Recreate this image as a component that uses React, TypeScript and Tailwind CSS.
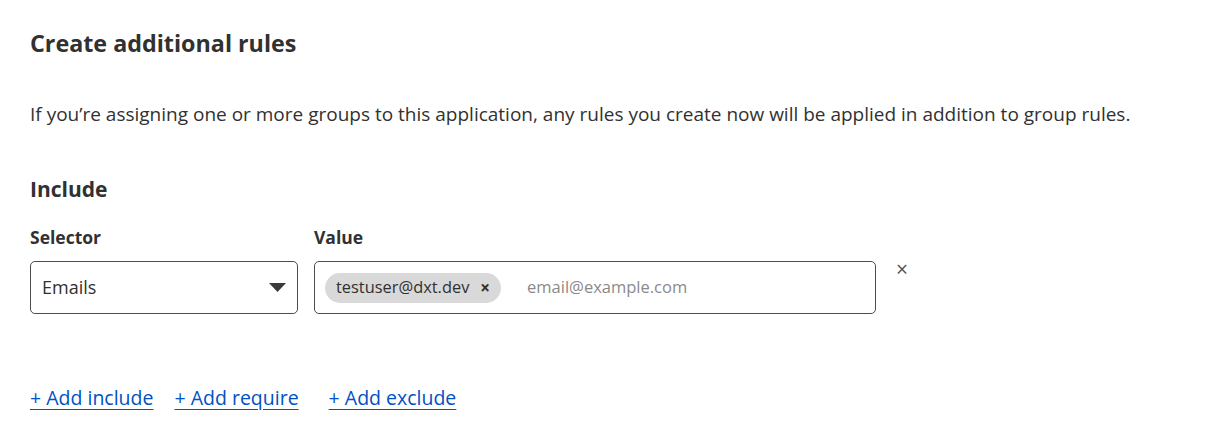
export default function App() {
  return (
    <div className="min-h-screen bg-white px-[30px] pt-[28px] text-[#313131] [font-family:'Open_Sans',sans-serif]">
      <h2 className="text-[23.3px] font-bold leading-[30px]">Create additional rules</h2>

      <p className="mt-[44px] text-[19px] leading-[24px]">
        If you’re assigning one or more groups to this application, any rules you create now will be applied in addition to group rules.
      </p>

      <h3 className="mt-[49px] text-[21px] font-bold leading-[28px]">Include</h3>

      <div className="mt-[22px] flex items-start">
        <div className="flex w-[268px] flex-col">
          <label className="text-[17.5px] font-bold leading-[24px]">Selector</label>
          <div className="mt-[12px] flex h-[53px] items-center justify-between rounded-[5px] border border-[#4d4d4d] pl-[11px] pr-[11px]">
            <span className="text-[18px]">Emails</span>
            <svg width="17" height="9" viewBox="0 0 17 9">
              <path d="M0 0 L17 0 L8.5 9 Z" fill="#3a3a3a" />
            </svg>
          </div>
        </div>

        <div className="ml-[16px] flex w-[562px] flex-col">
          <label className="text-[17.5px] font-bold leading-[24px]">Value</label>
          <div className="mt-[12px] flex h-[53px] items-center rounded-[5px] border border-[#4d4d4d] pl-[10px]">
            <span className="flex h-[30px] items-center gap-[11px] rounded-full bg-[#d9d9d9] pl-[11px] pr-[11px] text-[16.4px]">
              testuser@dxt.dev
              <span className="text-[17px] font-bold leading-none">×</span>
            </span>
            <span className="ml-[26px] text-[16.5px] text-[#8a8a8a]">email@example.com</span>
          </div>
        </div>

        <button className="ml-[20px] mt-[34px] text-[21px] leading-none text-[#555]">×</button>
      </div>

      <div className="mt-[72px] flex text-[19.5px] leading-[24px] text-[#0051c3]">
        <a href="#" className="underline underline-offset-[4px]">+ Add include</a>
        <a href="#" className="ml-[21px] underline underline-offset-[4px]">+ Add require</a>
        <a href="#" className="ml-[30px] underline underline-offset-[4px]">+ Add exclude</a>
      </div>
    </div>
  );
}
